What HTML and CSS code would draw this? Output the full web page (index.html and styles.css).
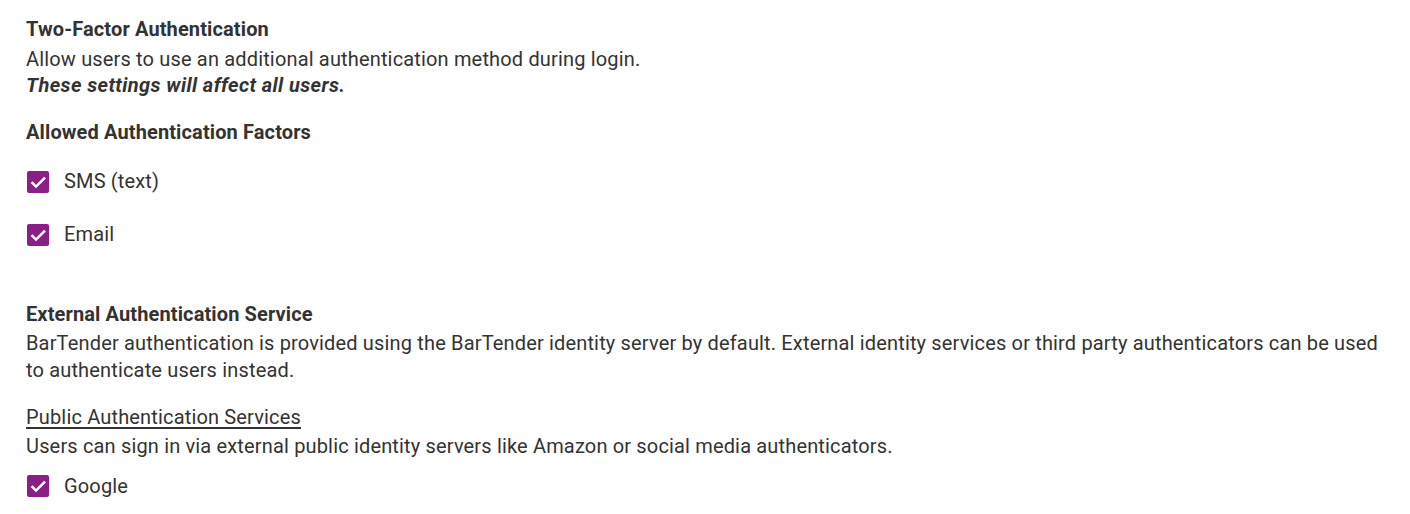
FILE: index.html
```html
<!DOCTYPE html>
<html lang="en">
<head>
    <meta charset="UTF-8">
    <title>Authentication Settings</title>
    <link rel="stylesheet" href="styles.css">
</head>
<body>
    <div class="settings">
        <section class="section">
            <h2 class="section-title">Two-Factor Authentication</h2>
            <p class="section-desc">Allow users to use an additional authentication method during login.</p>
            <p class="section-desc warning">These settings will affect all users.</p>

            <h3 class="group-title">Allowed Authentication Factors</h3>
            <div class="option-list">
                <label class="option">
                    <input type="checkbox" checked>
                    <span class="check-box">
                        <svg viewBox="0 0 22 22" width="22" height="22"><path d="M4.6 11.2l4.4 4.4 9-9" fill="none" stroke="#fff" stroke-width="2.5"/></svg>
                    </span>
                    <span class="option-label">SMS (text)</span>
                </label>
                <label class="option">
                    <input type="checkbox" checked>
                    <span class="check-box">
                        <svg viewBox="0 0 22 22" width="22" height="22"><path d="M4.6 11.2l4.4 4.4 9-9" fill="none" stroke="#fff" stroke-width="2.5"/></svg>
                    </span>
                    <span class="option-label">Email</span>
                </label>
            </div>
        </section>

        <section class="section">
            <h2 class="section-title">External Authentication Service</h2>
            <p class="section-desc">BarTender authentication is provided using the BarTender identity server by default. External identity services or third party authenticators can be used to authenticate users instead.</p>

            <h3 class="sub-title">Public Authentication Services</h3>
            <p class="section-desc">Users can sign in via external public identity servers like Amazon or social media authenticators.</p>
            <div class="option-list compact">
                <label class="option">
                    <input type="checkbox" checked>
                    <span class="check-box">
                        <svg viewBox="0 0 22 22" width="22" height="22"><path d="M4.6 11.2l4.4 4.4 9-9" fill="none" stroke="#fff" stroke-width="2.5"/></svg>
                    </span>
                    <span class="option-label">Google</span>
                </label>
            </div>
        </section>
    </div>
</body>
</html>
```

FILE: styles.css
```css
* {
    margin: 0;
    padding: 0;
    box-sizing: border-box;
}

body {
    font-family: Roboto, 'Liberation Sans', sans-serif;
    font-size: 20px;
    line-height: 26.67px;
    letter-spacing: 0.16px;
    color: #333;
    background: #fff;
}

.settings {
    padding: 16px 26px 0 26px;
}

.section-title,
.group-title {
    font-size: 20px;
    font-weight: 700;
    letter-spacing: 0.12px;
}

.section-title {
    margin-bottom: 3px;
}

.warning {
    font-style: italic;
    font-weight: 700;
    letter-spacing: 0.4px;
}

.group-title {
    margin-top: 20px;
}

.option-list {
    display: flex;
    flex-direction: column;
    gap: 13px;
    margin-top: 16px;
}

.option-list.compact {
    margin-top: 6px;
}

.option {
    display: flex;
    align-items: center;
    gap: 15px;
    height: 40px;
    cursor: pointer;
}

.option input {
    display: none;
}

.check-box {
    width: 22px;
    height: 22px;
    margin-left: 1px;
    border-radius: 2px;
    background: #8a1f87;
    display: flex;
}

.section + .section {
    margin-top: 46px;
}

.sub-title {
    margin-top: 20px;
    margin-bottom: 3px;
    font-size: 20px;
    font-weight: 400;
    text-decoration: underline;
    text-underline-offset: 3px;
}
```
